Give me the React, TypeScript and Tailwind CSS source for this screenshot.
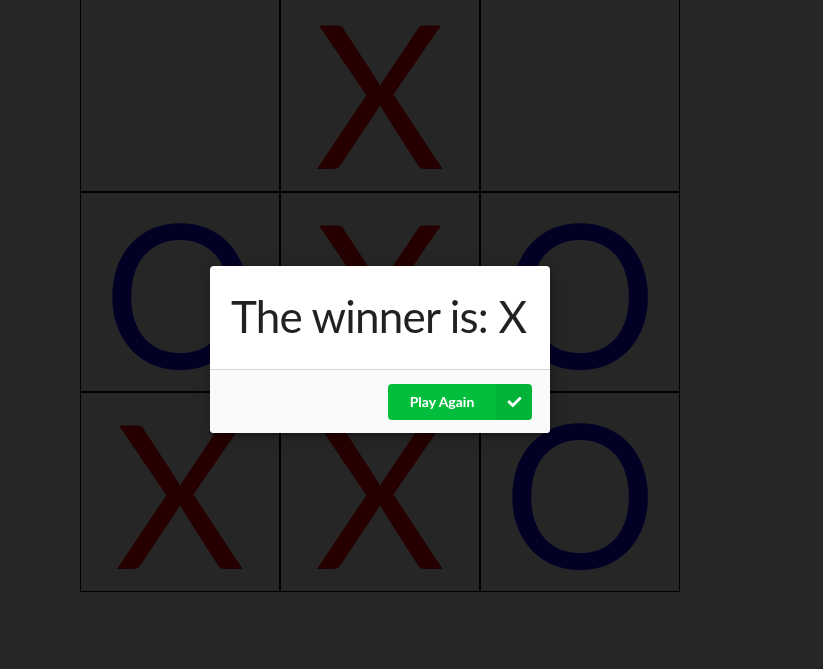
import React from "react";

const board: ("X" | "O" | "")[] = ["", "X", "", "O", "X", "O", "X", "X", "O"];

function Cell({ v }: { v: "X" | "O" | "" }) {
  return (
    <div className="h-[200px] w-[200px] border border-black flex items-center justify-center overflow-hidden">
      {v === "X" && (
        <span className="text-[200px] leading-[200px] font-normal text-[#ff0000]">X</span>
      )}
      {v === "O" && (
        <span className="text-[200px] leading-[200px] font-normal text-[#1a00ff] inline-block scale-x-[0.96]">
          O
        </span>
      )}
    </div>
  );
}

export default function App() {
  return (
    <div
      className="relative min-h-screen h-[669px] bg-white flex flex-col overflow-hidden"
      style={{ fontFamily: "Lato, 'Open Sans', sans-serif" }}
    >
      <div className="ml-[80px] mt-[-8px] grid grid-cols-[repeat(3,200px)] w-[600px]">
        {board.map((v, i) => (
          <Cell key={i} v={v} />
        ))}
      </div>

      <div className="fixed inset-0 bg-[rgba(0,0,0,0.85)]" />

      <div className="absolute left-[210px] top-[266px] w-[340px] bg-white rounded-[4px] shadow-[1px_3px_3px_0_rgba(0,0,0,0.2),1px_3px_15px_2px_rgba(0,0,0,0.2)]">
        <div className="h-[103px] pl-[21px] pb-[2px] flex items-center">
          <span className="text-[44px] leading-[1.2] tracking-[-0.8px] text-[rgba(0,0,0,0.87)] whitespace-nowrap">
            The winner is: X
          </span>
        </div>
        <div className="bg-[#f9fafb] border-t border-[rgba(34,36,38,0.15)] rounded-b-[4px] pt-[14px] pb-[13px] pr-[18px] flex justify-end">
          <button className="flex h-[36px] w-[144px] rounded-[4px] bg-[#03bd3c] text-white overflow-hidden">
            <span className="flex-1 flex items-center justify-center text-[14px] font-bold pb-[1px]">
              Play Again
            </span>
            <span className="w-[36px] h-full bg-[rgba(0,0,0,0.05)] flex items-center justify-center">
              <svg width="15" height="12" viewBox="0 0 512 440" className="mt-[1px]">
                <path
                  fill="white"
                  d="M173.898 439.404l-166.4-166.4c-9.997-9.997-9.997-26.206 0-36.204l36.203-36.204c9.997-9.998 26.207-9.998 36.204 0L192 312.69 432.095 72.596c9.997-9.997 26.207-9.997 36.204 0l36.203 36.204c9.997 9.997 9.997 26.206 0 36.204l-294.4 294.401c-9.998 9.997-26.207 9.997-36.204-.001z"
                  transform="translate(0,-72)"
                />
              </svg>
            </span>
          </button>
        </div>
      </div>
    </div>
  );
}
